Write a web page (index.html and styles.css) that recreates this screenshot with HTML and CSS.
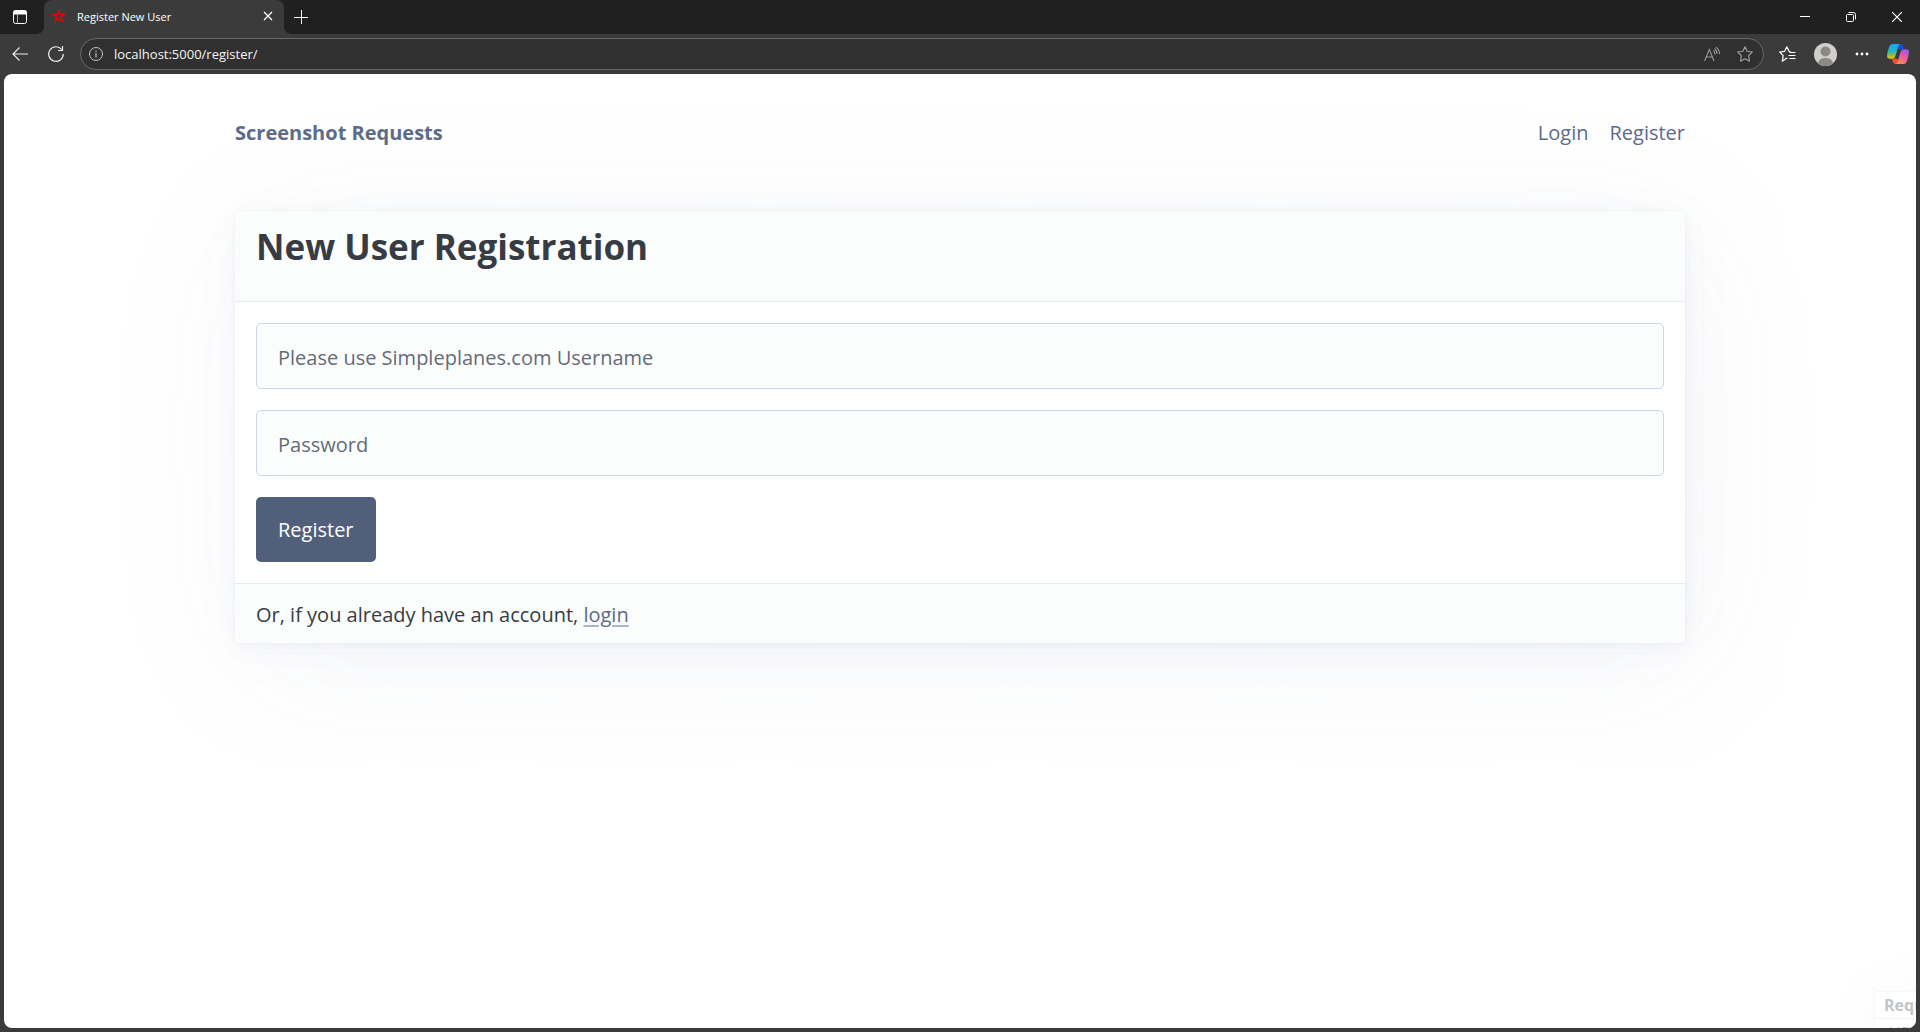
FILE: index.html
```html
<!DOCTYPE html>
<html lang="en">
<head>
<meta charset="utf-8">
<title>Register New User</title>
<link rel="stylesheet" href="styles.css">
</head>
<body>
<div class="browser">
  <div class="titlebar">
    <button class="icon-btn tab-actions" aria-label="Tab actions">
      <svg width="14" height="14" viewBox="0 0 14 14" fill="none" stroke="#fff"><rect x=".5" y=".5" width="13" height="13" rx="2"/><path d="M1 1h12v3H1z" fill="#fff"/><path d="M4.500 4v9.500" stroke="#aaa"/></svg>
    </button>
    <div class="tab">
      <svg width="14" height="14" viewBox="0 0 14 14" fill="none" stroke="#f00000" stroke-width="1.300"><path d="M7 1.500l1.400 4h4.100L9.200 8l1.200 4.100L7 9.700l-3.400 2.400L4.800 8 1.500 5.500h4.100z"/></svg>
      <span class="tab-title">Register New User</span>
      <button class="icon-btn" aria-label="Close tab">
        <svg width="10" height="10" viewBox="0 0 10 10" stroke="#fff" stroke-width="1.300"><path d="M1 1l8 8M9 1L1 9"/></svg>
      </button>
    </div>
    <button class="icon-btn new-tab" aria-label="New tab">
      <svg width="14" height="14" viewBox="0 0 14 14" stroke="#fff"><path d="M7.500 0v14M0 7.500h14"/></svg>
    </button>
    <div class="window-controls">
      <button class="icon-btn" aria-label="Minimize"><svg width="10" height="10" viewBox="0 0 10 10" stroke="#fff"><path d="M0 4.500h10"/></svg></button>
      <button class="icon-btn" aria-label="Restore"><svg width="10" height="10" viewBox="0 0 10 10" fill="none" stroke="#fff"><rect x=".5" y="2.500" width="7" height="7" rx="1"/><path d="M2.500 .5h5a2 2 0 0 1 2 2v5"/></svg></button>
      <button class="icon-btn" aria-label="Close"><svg width="10" height="10" viewBox="0 0 10 10" stroke="#fff" stroke-width="1.200"><path d="M0 0l10 10M10 0L0 10"/></svg></button>
    </div>
  </div>
  <div class="toolbar">
    <button class="icon-btn" aria-label="Back"><svg width="16" height="14" viewBox="0 0 16 14" fill="none" stroke="#eee" stroke-width="1.100"><path d="M16 7H1M7.500 .5L1 7l6.500 6.500"/></svg></button>
    <button class="icon-btn" aria-label="Refresh"><svg width="16" height="16" viewBox="0 0 16 16" fill="none" stroke="#eee" stroke-width="1.200"><path d="M15.300 8A7.300 7.300 0 1 1 13.700 3.500M14.500 0v4.500H10"/></svg></button>
    <div class="address">
      <svg width="14" height="14" viewBox="0 0 14 14" fill="none" stroke="#c4c4c4"><circle cx="7" cy="7" r="6.500"/><path d="M7 6v4.500M7 3.500v1.300" stroke-width="1.200"/></svg>
      <input class="url" type="text" aria-label="Address" value="localhost:5000/register/">
      <button class="icon-btn" aria-label="Read aloud"><svg width="16" height="15" viewBox="0 0 16 15" fill="none" stroke="#989898" stroke-width="1.100"><path d="M.6 14L5.300 2.500 10 14M2.300 10h6M9.500 3.500q1.500 1.500 1.500 4M10.500 1.500q2.500 2 2.500 5.500M12 0q3.500 3 3.500 7"/></svg></button>
      <button class="icon-btn" aria-label="Add to favorites"><svg width="16" height="16" viewBox="0 0 16 16" fill="none" stroke="#a0a0a0" stroke-width="1.100" stroke-linejoin="round"><path d="M8 .7l2.200 4.600 5.100.7-3.700 3.600.9 5.600L8 12.700l-4.500 2.500.9-5.600L.7 6l5.100-.7z"/></svg></button>
    </div>
    <div class="tools">
      <button class="icon-btn" aria-label="Favorites"><svg width="17" height="16" viewBox="0 0 17 16" fill="none" stroke="#fff" stroke-width="1.200" stroke-linejoin="round"><path d="M8.500 12.500l-1-.2-4.200 2.900.9-5.600L.7 6l4.900-.7L7.800.8l2.300 4.500 1.400.2M10.500 6.500h6M9.500 9.500h7M10.500 12.500h6"/></svg></button>
      <button class="icon-btn" aria-label="Profile"><svg width="23" height="23" viewBox="0 0 23 23"><circle cx="11.500" cy="11.500" r="11.500" fill="#d1cfcb"/><circle cx="11.500" cy="8.500" r="5" fill="#8c8984"/><path d="M4 20.300q1-5.300 7.500-5.300t7.500 5.300a11.500 11.500 0 0 1-15 0z" fill="#8c8984"/></svg></button>
      <button class="icon-btn" aria-label="Settings and more"><svg width="14" height="4" viewBox="0 0 14 4" fill="#fff"><circle cx="2" cy="2" r="1.400"/><circle cx="7" cy="2" r="1.400"/><circle cx="12" cy="2" r="1.400"/></svg></button>
      <button class="icon-btn" aria-label="Copilot"><svg width="22" height="20" viewBox="0 0 22 20">
        <defs>
          <linearGradient id="cool" x1="0" y1="0" x2="0" y2="1"><stop offset="0" stop-color="#16a8ef"/><stop offset=".45" stop-color="#20b4c8"/><stop offset=".75" stop-color="#82bd45"/><stop offset="1" stop-color="#f0c713"/></linearGradient>
          <linearGradient id="warm" x1=".7" y1="0" x2=".3" y2="1"><stop offset="0" stop-color="#9a58ee"/><stop offset=".5" stop-color="#ed5a9c"/><stop offset="1" stop-color="#ff8b50"/></linearGradient>
        </defs>
        <path d="M10 0h3.500q2 0 2.600 2l1 3.500h-4q-1.600 0-2.200-1.500z" fill="#164ed0"/>
        <path d="M12 20H8.500q-2 0-2.600-2l-1-3.500h4q1.600 0 2.200 1.500z" fill="#f2512d"/>
        <path d="M5.500 0H14q-2 0-2.600 2L8.500 12q-.8 2.700-3.300 2.700H3q-3.200 0-3-3Q.5 7 2.300 2.500 3.300 0 5.500 0z" fill="url(#cool)"/>
        <path d="M16.500 20H8q2 0 2.600-2l2.900-10q.8-2.700 3.300-2.700H19q3.200 0 3 3-.5 4.700-2.300 9.200-1 2.500-3.200 2.500z" fill="url(#warm)"/>
      </svg></button>
    </div>
  </div>

  <div class="page">
    <header class="container">
      <nav class="site-nav">
        <a class="brand" href="#">Screenshot Requests</a>
        <div class="links"><a href="#">Login</a><a href="#">Register</a></div>
      </nav>
    </header>
    <main class="container">
      <article class="card">
        <header class="card-header"><h1>New User Registration</h1></header>
        <form class="card-body">
          <input type="text" aria-label="Username" placeholder="Please use Simpleplanes.com Username">
          <input type="password" aria-label="Password" placeholder="Password">
          <button type="button" class="submit">Register</button>
        </form>
        <footer class="card-footer">Or, if you already have an account, <a href="#">login</a></footer>
      </article>
    </main>
    <div class="popup" aria-hidden="true">
      <div class="popup-title">Requests</div>
      <div class="popup-row">URL</div>
    </div>
  </div>
</div>
</body>
</html>
```
FILE: styles.css
```css
* { box-sizing: border-box; }

body {
  margin: 0;
  background: #3b3b3b;
  font-family: "Open Sans", "Noto Sans", sans-serif;
  color: #373c44;
}

.browser {
  display: flex;
  flex-direction: column;
  height: 100vh;
}

svg { display: block; flex: none; }

.icon-btn {
  display: flex;
  align-items: center;
  justify-content: center;
  padding: 0;
  border: 0;
  background: none;
}

/* Browser window */
.titlebar {
  display: flex;
  align-items: center;
  height: 34px;
  flex: none;
  background: #202020;
}

.tab-actions { width: 40px; }

.tab {
  position: relative;
  display: flex;
  align-items: center;
  width: 240px;
  height: 34px;
  margin-left: 4px;
  padding: 0 11px 2px 8px;
  border-radius: 8px 8px 0 0;
  background: #3b3b3b;
  color: #fff;
  font-size: 11px;
}

.tab::before,
.tab::after {
  content: "";
  position: absolute;
  bottom: 0;
  width: 8px;
  height: 8px;
}

.tab::before {
  left: -8px;
  background: radial-gradient(circle at 0 0, #202020 8px, #3b3b3b 8px);
}

.tab::after {
  right: -8px;
  background: radial-gradient(circle at 100% 0, #202020 8px, #3b3b3b 8px);
}

.tab-title { flex: 1; margin-left: 11px; }

.new-tab { width: 34px; }

.window-controls {
  display: flex;
  margin-left: auto;
}

.window-controls .icon-btn { width: 46px; height: 34px; }

.toolbar {
  display: flex;
  align-items: center;
  height: 40px;
  flex: none;
  padding: 0 11px 0 12px;
  gap: 20px;
}

.address {
  display: flex;
  flex: 1;
  align-items: center;
  gap: 17px;
  height: 32px;
  margin: 0 -5px 0 -4px;
  padding: 0 10px 0 8px;
  border: 1px solid #686868;
  border-radius: 16px;
  background: #303030;
}

.url {
  flex: 1;
  margin-left: -6px;
  padding: 0;
  border: 0;
  background: none;
  color: #f4f4f4;
  font: 13px "Open Sans", "Noto Sans", sans-serif;
}

.tools {
  display: flex;
  align-items: center;
  gap: 18px;
}

/* Page */
.page {
  position: relative;
  flex: 1;
  min-height: 0;
  margin: 0 4px 4px;
  overflow: hidden;
  border-radius: 8px;
  background: #fff;
  font-size: 20px;
  line-height: 32px;
}

.container {
  width: 100%;
  max-width: 1450px;
  margin: 0 auto;
}

.site-nav {
  display: flex;
  align-items: center;
  justify-content: space-between;
  padding: 43px 0 0;
}

a { color: #5d6b89; text-decoration: none; }

.brand { font-weight: 700; }

.links { display: flex; gap: 21px; }

.card {
  margin-top: 62px;
  border-radius: 5px;
  background: #fff;
  box-shadow:
    0 1px 4px rgba(129, 145, 181, .017),
    1px 1px 8px rgba(129, 145, 181, .024),
    1px 3px 16px rgba(129, 145, 181, .03),
    2px 5px 28px rgba(129, 145, 181, .036),
    4px 9px 53px rgba(129, 145, 181, .043),
    11px 21px 160px rgba(129, 145, 181, .07),
    0 0 0 1px rgba(129, 145, 181, .015);
}

.card-header {
  padding: 14px 21px 32px;
  border-bottom: 1px solid #e7eaf0;
  border-radius: 5px 5px 0 0;
  background: #fbfdfc;
}

h1 {
  margin: 0;
  font-size: 35px;
  line-height: 44px;
  color: #373c44;
}

.card-body {
  display: flex;
  flex-direction: column;
  align-items: flex-start;
  gap: 21px;
  padding: 21px;
}

.card-body input {
  width: 100%;
  height: 66px;
  padding: 3px 21px 0;
  border: 1px solid #cfd5e2;
  border-radius: 5px;
  background: #fbfdfc;
  color: #373c44;
  font: 20px "Open Sans", "Noto Sans", sans-serif;
}

.card-body input::placeholder { color: #646b79; opacity: 1; }

.submit {
  height: 65px;
  padding: 0 22px;
  border: 0;
  border-radius: 5px;
  background: #525f7a;
  color: #fff;
  font: 20px "Open Sans", "Noto Sans", sans-serif;
}

.card-footer {
  padding: 15px 21px 12px;
  border-top: 1px solid #e7eaf0;
  border-radius: 0 0 5px 5px;
  background: #fbfdfc;
}

.card-footer a {
  text-decoration: underline 2px #adb4c5;
  text-underline-offset: 3px;
}

.popup {
  position: absolute;
  top: 918px;
  left: calc(100% - 41px);
  width: 300px;
  border-radius: 2px;
  background: #fff;
  box-shadow: 0 0 0 1px #f7f7f8, 0 0 50px rgba(129, 145, 181, .06);
  color: #c4c5c8;
  font-size: 16px;
}

.popup-title {
  padding: 0 9px;
  border-bottom: 1px solid #f4f4f6;
  font-weight: 700;
  line-height: 26px;
}

.popup-row { padding: 0 14px; line-height: 28px; }
```
